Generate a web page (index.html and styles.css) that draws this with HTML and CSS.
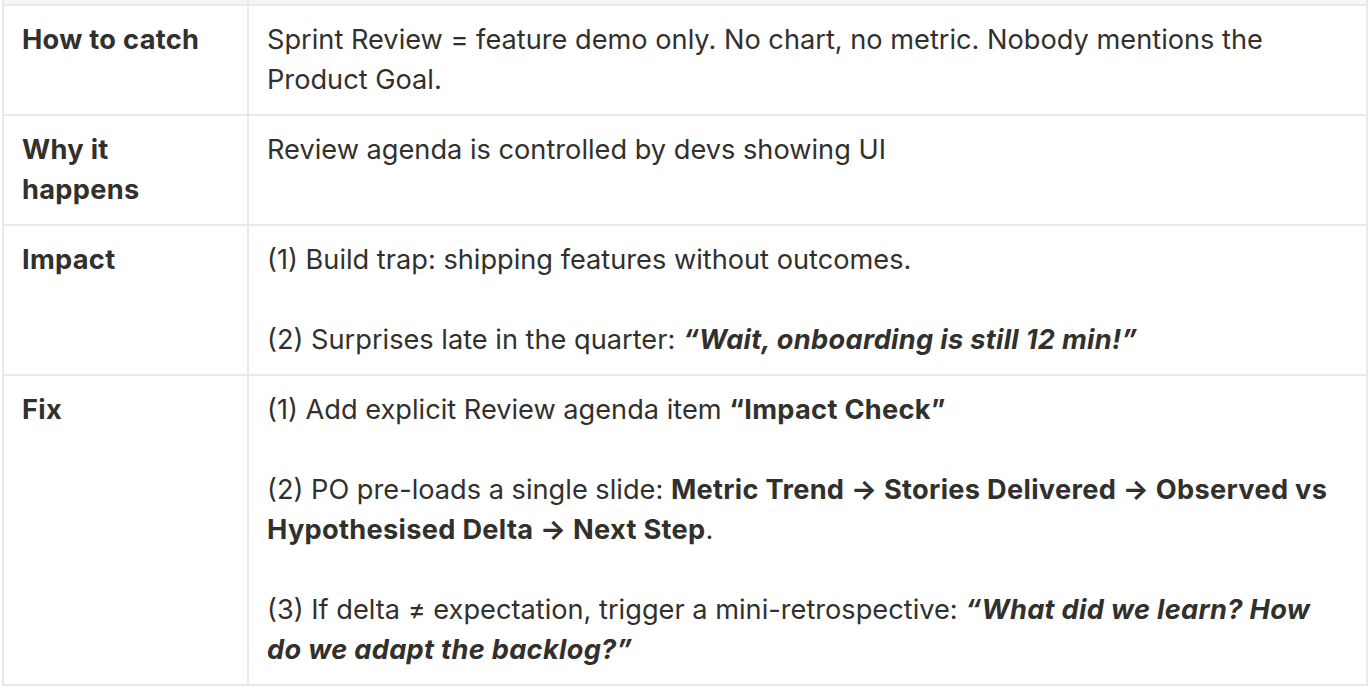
FILE: index.html
```html
<!DOCTYPE html>
<html>
<head>
<meta charset="utf-8">
<link rel="stylesheet" href="styles.css">
</head>
<body>
<table class="grid">
  <colgroup><col class="c1"><col class="c2"></colgroup>
  <tr class="head"><td></td><td></td></tr>
  <tr>
    <td class="label">How to catch</td>
    <td class="body"><p>Sprint Review = feature demo only. No chart, no metric. Nobody mentions the Product Goal.</p></td>
  </tr>
  <tr>
    <td class="label">Why it happens</td>
    <td class="body"><p>Review agenda is controlled by devs showing UI</p></td>
  </tr>
  <tr>
    <td class="label">Impact</td>
    <td class="body">
      <p>(1) Build trap: shipping features without outcomes.</p>
      <p>(2) Surprises late in the quarter: <strong><em>“Wait, onboarding is still 12 min!”</em></strong></p>
    </td>
  </tr>
  <tr>
    <td class="label">Fix</td>
    <td class="body">
      <p>(1) Add explicit Review agenda item <strong>“Impact Check”</strong></p>
      <p>(2) PO pre-loads a single slide: <strong>Metric Trend → Stories Delivered → Observed vs Hypothesised Delta → Next Step</strong>.</p>
      <p>(3) If delta ≠ expectation, trigger a mini-retrospective: <strong><em>“What did we learn? How do we adapt the backlog?”</em></strong></p>
    </td>
  </tr>
</table>
</body>
</html>
```

FILE: styles.css
```css
html, body {
  margin: 0;
  padding: 0;
  background: #ffffff;
}
body {
  font-family: Inter, "Liberation Sans", sans-serif;
  font-size: 27.2px;
  line-height: 40px;
  color: #32302c;
}
.grid {
  margin-left: 2px;
  width: 1366px;
  border-collapse: separate;
  border-spacing: 0;
  border-left: 2px solid #e9e9e7;
  table-layout: fixed;
}
.c1 { width: 245px; }
.grid td {
  border-right: 2px solid #e9e9e7;
  border-bottom: 2px solid #e9e9e7;
  padding: 14px 20px 14px 18px;
  vertical-align: top;
}
.grid tr.head td {
  height: 4px;
  padding: 0;
  background: #f7f6f3;
}
.label {
  font-weight: 700;
  letter-spacing: 0.3px;
}
.body p {
  margin: 0;
}
.body p + p {
  margin-top: 40px;
}
strong {
  font-weight: 700;
  letter-spacing: 0.3px;
}
```
